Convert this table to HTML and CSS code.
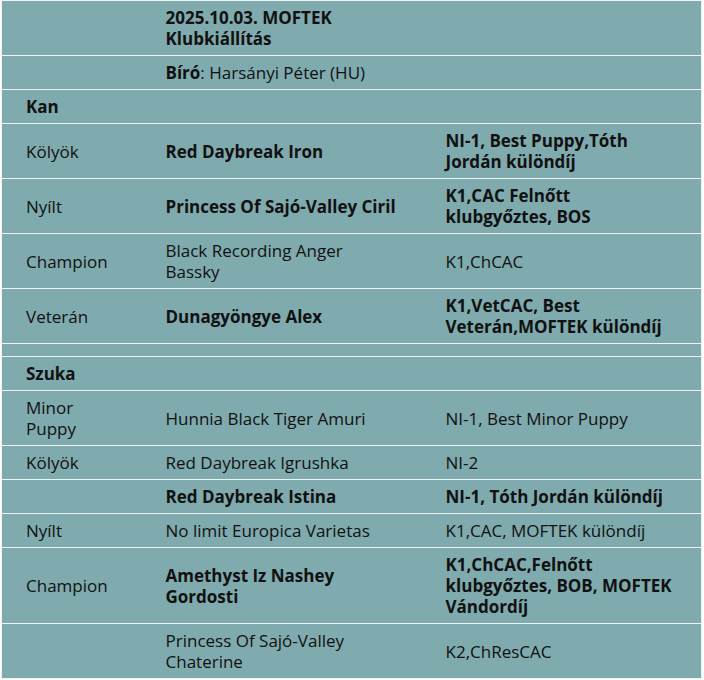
FILE: index.html
```html
<!DOCTYPE html>
<html lang="hu">
<head>
<meta charset="utf-8">
<title>MOFTEK Klubkiállítás</title>
<link rel="stylesheet" href="styles.css">
</head>
<body>
<table class="results">
  <colgroup>
    <col class="c-class">
    <col class="c-dog">
    <col class="c-award">
  </colgroup>
  <tbody>
    <tr><td></td><td class="b">2025.10.03. MOFTEK<br>Klubkiállítás</td><td></td></tr>
    <tr><td></td><td><span class="b">Bíró</span>: Harsányi Péter (HU)</td><td></td></tr>
    <tr><td class="b">Kan</td><td></td><td></td></tr>
    <tr><td>Kölyök</td><td class="b">Red Daybreak Iron</td><td class="b">NI-1, Best Puppy,Tóth<br>Jordán különdíj</td></tr>
    <tr><td>Nyílt</td><td class="b">Princess Of Sajó-Valley Ciril</td><td class="b">K1,CAC Felnőtt<br>klubgyőztes, BOS</td></tr>
    <tr><td>Champion</td><td>Black Recording Anger<br>Bassky</td><td>K1,ChCAC</td></tr>
    <tr><td>Veterán</td><td class="b">Dunagyöngye Alex</td><td class="b">K1,VetCAC, Best<br>Veterán,MOFTEK különdíj</td></tr>
    <tr class="spacer"><td></td><td></td><td></td></tr>
    <tr><td class="b">Szuka</td><td></td><td></td></tr>
    <tr><td>Minor<br>Puppy</td><td>Hunnia Black Tiger Amuri</td><td>NI-1, Best Minor Puppy</td></tr>
    <tr><td>Kölyök</td><td>Red Daybreak Igrushka</td><td>NI-2</td></tr>
    <tr><td></td><td class="b">Red Daybreak Istina</td><td class="b">NI-1, Tóth Jordán különdíj</td></tr>
    <tr><td>Nyílt</td><td>No limit Europica Varietas</td><td>K1,CAC, MOFTEK különdíj</td></tr>
    <tr><td>Champion</td><td class="b">Amethyst Iz Nashey<br>Gordosti</td><td class="b">K1,ChCAC,Felnőtt<br>klubgyőztes, BOB, MOFTEK<br>Vándordíj</td></tr>
    <tr><td></td><td>Princess Of Sajó-Valley<br>Chaterine</td><td>K2,ChResCAC</td></tr>
  </tbody>
</table>
</body>
</html>
```

FILE: styles.css
```css
html, body {
  margin: 0;
  padding: 0;
  background: #ffffff;
}

.results {
  margin: 0 0 0 1px;
  width: 700px;
  table-layout: fixed;
  border-collapse: collapse;
  background: #7faaae;
  border: 1px solid #eef4f4;
  font-family: "Open Sans", "Liberation Sans", sans-serif;
  font-size: 17px;
  line-height: 21px;
  color: #111;
}

.c-class { width: 140px; }
.c-dog { width: 280px; }
.c-award { width: 280px; }

.results td {
  padding: 6px 24px;
  vertical-align: middle;
  border-top: 1px solid #eef4f4;
  border-bottom: 1px solid #eef4f4;
  text-align: left;
  white-space: nowrap;
}

.results .spacer td {
  padding: 6px 24px;
  line-height: 0;
  height: 0;
}

.b {
  font-weight: 700;
}
```
